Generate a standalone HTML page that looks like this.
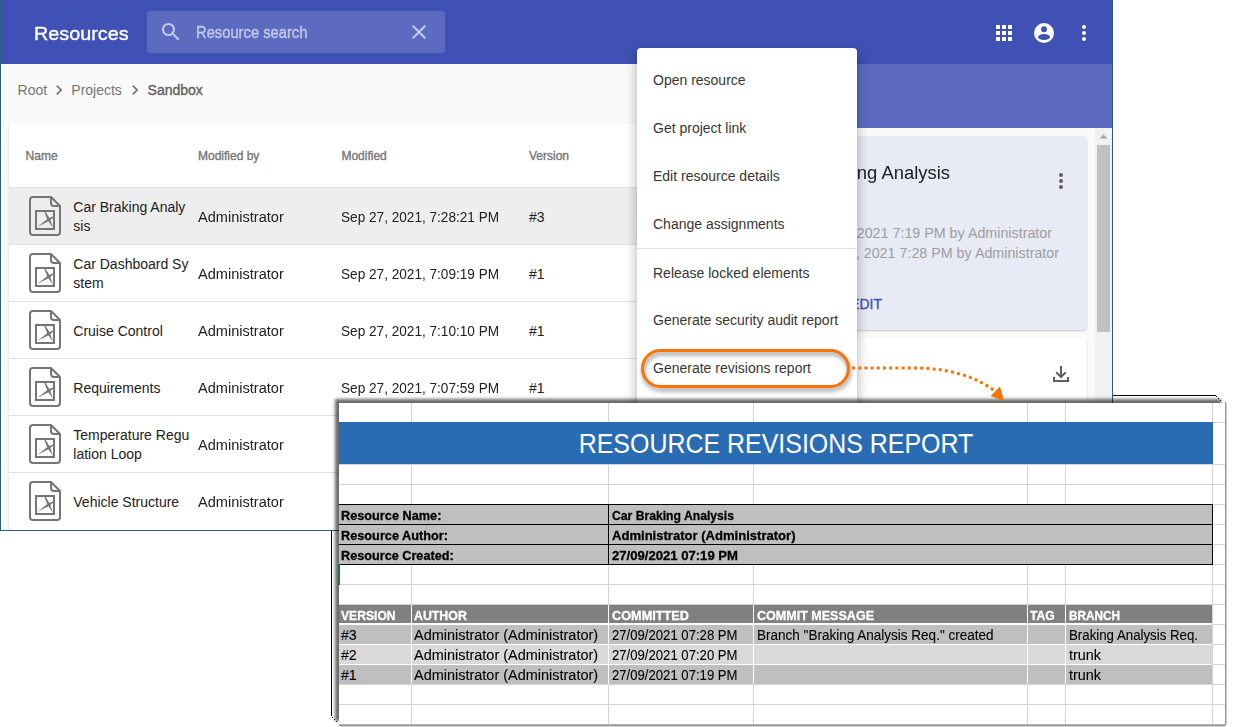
<!DOCTYPE html>
<html><head><meta charset="utf-8"><style>
html,body{margin:0;padding:0;width:1249px;height:727px;overflow:hidden;background:#fff;}
body{position:relative;font-family:"Liberation Sans",sans-serif;}
.t{position:absolute;white-space:nowrap;}
.r{position:absolute;}
</style></head><body>
<div class="r" style="left:0;top:0;width:1113px;height:531px;overflow:hidden">
<div class="r" style="left:1px;top:64px;width:1111px;height:466px;background:#fafafa;"></div>
<div class="r" style="left:0px;top:0px;width:1112px;height:64px;background:#3f51b5;"></div>
<div class="r" style="left:740px;top:64px;width:372px;height:64px;background:#5c6bc0;"></div>
<div class="t " style="left:33.8px;top:21.92px;font-size:19px;line-height:23px;color:#fff;font-weight:normal;transform:scaleX(1.0408);transform-origin:0 0;-webkit-text-stroke:0.35px currentColor;">Resources</div>
<div class="r" style="left:147px;top:11px;width:298px;height:42px;background:#5c6bc0;border-radius:4px"></div>
<svg class="r" style="left:159px;top:20px" width="24" height="24" viewBox="0 0 24 24"><path fill="#c5cae9" d="M15.5 14h-.79l-.28-.27C15.41 12.59 16 11.11 16 9.5 16 5.91 13.09 3 9.5 3S3 5.91 3 9.5 5.91 16 9.5 16c1.61 0 3.09-.59 4.23-1.57l.27.28v.79l5 4.99L20.49 19l-4.99-5zm-6 0C7.01 14 5 11.99 5 9.5S7.01 5 9.5 5 14 7.01 14 9.5 11.99 14 9.5 14z"/></svg>
<div class="t " style="left:195.6px;top:22.76px;font-size:16px;line-height:19px;color:#c5cae9;font-weight:normal;transform:scaleX(0.9214);transform-origin:0 0;-webkit-text-stroke:0.35px currentColor;">Resource search</div>
<svg class="r" style="left:407px;top:20px" width="24" height="24" viewBox="0 0 24 24"><path fill="#c5cae9" d="M19 6.41L17.59 5 12 10.59 6.41 5 5 6.41 10.59 12 5 17.59 6.41 19 12 13.41 17.59 19 19 17.59 13.41 12z"/></svg>
<div class="r" style="left:996px;top:25px;width:4px;height:4px;background:#fff;"></div>
<div class="r" style="left:996px;top:31px;width:4px;height:4px;background:#fff;"></div>
<div class="r" style="left:996px;top:37px;width:4px;height:4px;background:#fff;"></div>
<div class="r" style="left:1002px;top:25px;width:4px;height:4px;background:#fff;"></div>
<div class="r" style="left:1002px;top:31px;width:4px;height:4px;background:#fff;"></div>
<div class="r" style="left:1002px;top:37px;width:4px;height:4px;background:#fff;"></div>
<div class="r" style="left:1008px;top:25px;width:4px;height:4px;background:#fff;"></div>
<div class="r" style="left:1008px;top:31px;width:4px;height:4px;background:#fff;"></div>
<div class="r" style="left:1008px;top:37px;width:4px;height:4px;background:#fff;"></div>
<svg class="r" style="left:1034px;top:23px" width="20" height="20" viewBox="0 0 20 20"><circle cx="10" cy="10" r="10" fill="#fff"/><circle cx="10" cy="6.2" r="3" fill="#3f51b5"/><ellipse cx="10" cy="14" rx="6" ry="3" fill="#3f51b5"/></svg>
<div class="r" style="left:1082px;top:25px;width:4px;height:4px;background:#fff;border-radius:50%"></div>
<div class="r" style="left:1082px;top:31px;width:4px;height:4px;background:#fff;border-radius:50%"></div>
<div class="r" style="left:1082px;top:37px;width:4px;height:4px;background:#fff;border-radius:50%"></div>
<div class="t " style="left:17.6px;top:81.65px;font-size:14px;line-height:17px;color:#757575;font-weight:normal;">Root</div>
<svg class="r" style="left:48.8px;top:80px" width="20" height="20" viewBox="0 0 24 24"><path fill="#757575" d="M10 6L8.59 7.41 13.17 12l-4.58 4.59L10 18l6-6z"/></svg>
<div class="t " style="left:71.3px;top:81.65px;font-size:14px;line-height:17px;color:#757575;font-weight:normal;">Projects</div>
<svg class="r" style="left:125.3px;top:80px" width="20" height="20" viewBox="0 0 24 24"><path fill="#757575" d="M10 6L8.59 7.41 13.17 12l-4.58 4.59L10 18l6-6z"/></svg>
<div class="t " style="left:147.6px;top:81.65px;font-size:14px;line-height:17px;color:#616161;font-weight:normal;-webkit-text-stroke:0.35px currentColor;">Sandbox</div>
<div class="r" style="left:9px;top:123px;width:700px;height:407px;background:#fff;border-radius:4px;box-shadow:0 1px 3px rgba(0,0,0,.15)"></div>
<div class="t " style="left:25.6px;top:149.34px;font-size:12px;line-height:14px;color:#757575;font-weight:normal;-webkit-text-stroke:0.35px currentColor;">Name</div>
<div class="t " style="left:198px;top:149.34px;font-size:12px;line-height:14px;color:#757575;font-weight:normal;-webkit-text-stroke:0.35px currentColor;">Modified by</div>
<div class="t " style="left:341.4px;top:149.34px;font-size:12px;line-height:14px;color:#757575;font-weight:normal;-webkit-text-stroke:0.35px currentColor;">Modified</div>
<div class="t " style="left:529px;top:149.34px;font-size:12px;line-height:14px;color:#757575;font-weight:normal;-webkit-text-stroke:0.35px currentColor;">Version</div>
<div class="r" style="left:9px;top:187px;width:700px;height:57px;background:#eeeeee;"></div>
<div class="r" style="left:9px;top:187px;width:700px;height:1px;background:#e0e0e0;"></div>
<svg class="r" style="left:29px;top:196px" width="32" height="40" viewBox="0 0 32 40">
<path d="M1,4 Q1,1 4,1 L22,1 L31,10 L31,36 Q31,39 28,39 L4,39 Q1,39 1,36 Z" fill="none" stroke="#757575" stroke-width="2" stroke-linejoin="round"/>
<path d="M22,1 L22,7 Q22,10 25,10 L31,10" fill="none" stroke="#757575" stroke-width="2"/>
<rect x="7" y="15" width="18" height="18" fill="none" stroke="#757575" stroke-width="2"/>
<polygon points="15.05,15.2 15.95,14.8 20.96,23.11 24,31.7 18.64,24.29" fill="#757575"/>
<polygon points="8.5,30.7 19.11,22.6 23.73,20.58 24.27,21.42 20.49,24.8" fill="#757575"/>
</svg>
<div class="t " style="left:73.3px;top:198.65px;font-size:14px;line-height:17px;color:#212121;font-weight:normal;">Car Braking Analy</div>
<div class="t " style="left:73.3px;top:217.65px;font-size:14px;line-height:17px;color:#212121;font-weight:normal;">sis</div>
<div class="t " style="left:198px;top:208.65px;font-size:14px;line-height:17px;color:#212121;font-weight:normal;transform:scaleX(1.0400);transform-origin:0 0;">Administrator</div>
<div class="t " style="left:341.4px;top:208.65px;font-size:14px;line-height:17px;color:#212121;font-weight:normal;transform:scaleX(0.9720);transform-origin:0 0;">Sep 27, 2021, 7:28:21 PM</div>
<div class="t " style="left:529px;top:208.65px;font-size:14px;line-height:17px;color:#212121;font-weight:normal;">#3</div>
<div class="r" style="left:9px;top:244px;width:700px;height:1px;background:#e0e0e0;"></div>
<svg class="r" style="left:29px;top:253px" width="32" height="40" viewBox="0 0 32 40">
<path d="M1,4 Q1,1 4,1 L22,1 L31,10 L31,36 Q31,39 28,39 L4,39 Q1,39 1,36 Z" fill="none" stroke="#757575" stroke-width="2" stroke-linejoin="round"/>
<path d="M22,1 L22,7 Q22,10 25,10 L31,10" fill="none" stroke="#757575" stroke-width="2"/>
<rect x="7" y="15" width="18" height="18" fill="none" stroke="#757575" stroke-width="2"/>
<polygon points="15.05,15.2 15.95,14.8 20.96,23.11 24,31.7 18.64,24.29" fill="#757575"/>
<polygon points="8.5,30.7 19.11,22.6 23.73,20.58 24.27,21.42 20.49,24.8" fill="#757575"/>
</svg>
<div class="t " style="left:73.3px;top:255.65px;font-size:14px;line-height:17px;color:#212121;font-weight:normal;">Car Dashboard Sy</div>
<div class="t " style="left:73.3px;top:274.65px;font-size:14px;line-height:17px;color:#212121;font-weight:normal;">stem</div>
<div class="t " style="left:198px;top:265.65px;font-size:14px;line-height:17px;color:#212121;font-weight:normal;transform:scaleX(1.0400);transform-origin:0 0;">Administrator</div>
<div class="t " style="left:341.4px;top:265.65px;font-size:14px;line-height:17px;color:#212121;font-weight:normal;transform:scaleX(0.9720);transform-origin:0 0;">Sep 27, 2021, 7:09:19 PM</div>
<div class="t " style="left:529px;top:265.65px;font-size:14px;line-height:17px;color:#212121;font-weight:normal;">#1</div>
<div class="r" style="left:9px;top:301px;width:700px;height:1px;background:#e0e0e0;"></div>
<svg class="r" style="left:29px;top:310px" width="32" height="40" viewBox="0 0 32 40">
<path d="M1,4 Q1,1 4,1 L22,1 L31,10 L31,36 Q31,39 28,39 L4,39 Q1,39 1,36 Z" fill="none" stroke="#757575" stroke-width="2" stroke-linejoin="round"/>
<path d="M22,1 L22,7 Q22,10 25,10 L31,10" fill="none" stroke="#757575" stroke-width="2"/>
<rect x="7" y="15" width="18" height="18" fill="none" stroke="#757575" stroke-width="2"/>
<polygon points="15.05,15.2 15.95,14.8 20.96,23.11 24,31.7 18.64,24.29" fill="#757575"/>
<polygon points="8.5,30.7 19.11,22.6 23.73,20.58 24.27,21.42 20.49,24.8" fill="#757575"/>
</svg>
<div class="t " style="left:73.3px;top:322.65px;font-size:14px;line-height:17px;color:#212121;font-weight:normal;">Cruise Control</div>
<div class="t " style="left:198px;top:322.65px;font-size:14px;line-height:17px;color:#212121;font-weight:normal;transform:scaleX(1.0400);transform-origin:0 0;">Administrator</div>
<div class="t " style="left:341.4px;top:322.65px;font-size:14px;line-height:17px;color:#212121;font-weight:normal;transform:scaleX(0.9720);transform-origin:0 0;">Sep 27, 2021, 7:10:10 PM</div>
<div class="t " style="left:529px;top:322.65px;font-size:14px;line-height:17px;color:#212121;font-weight:normal;">#1</div>
<div class="r" style="left:9px;top:358px;width:700px;height:1px;background:#e0e0e0;"></div>
<svg class="r" style="left:29px;top:367px" width="32" height="40" viewBox="0 0 32 40">
<path d="M1,4 Q1,1 4,1 L22,1 L31,10 L31,36 Q31,39 28,39 L4,39 Q1,39 1,36 Z" fill="none" stroke="#757575" stroke-width="2" stroke-linejoin="round"/>
<path d="M22,1 L22,7 Q22,10 25,10 L31,10" fill="none" stroke="#757575" stroke-width="2"/>
<rect x="7" y="15" width="18" height="18" fill="none" stroke="#757575" stroke-width="2"/>
<polygon points="15.05,15.2 15.95,14.8 20.96,23.11 24,31.7 18.64,24.29" fill="#757575"/>
<polygon points="8.5,30.7 19.11,22.6 23.73,20.58 24.27,21.42 20.49,24.8" fill="#757575"/>
</svg>
<div class="t " style="left:73.3px;top:379.65px;font-size:14px;line-height:17px;color:#212121;font-weight:normal;">Requirements</div>
<div class="t " style="left:198px;top:379.65px;font-size:14px;line-height:17px;color:#212121;font-weight:normal;transform:scaleX(1.0400);transform-origin:0 0;">Administrator</div>
<div class="t " style="left:341.4px;top:379.65px;font-size:14px;line-height:17px;color:#212121;font-weight:normal;transform:scaleX(0.9720);transform-origin:0 0;">Sep 27, 2021, 7:07:59 PM</div>
<div class="t " style="left:529px;top:379.65px;font-size:14px;line-height:17px;color:#212121;font-weight:normal;">#1</div>
<div class="r" style="left:9px;top:415px;width:700px;height:1px;background:#e0e0e0;"></div>
<svg class="r" style="left:29px;top:424px" width="32" height="40" viewBox="0 0 32 40">
<path d="M1,4 Q1,1 4,1 L22,1 L31,10 L31,36 Q31,39 28,39 L4,39 Q1,39 1,36 Z" fill="none" stroke="#757575" stroke-width="2" stroke-linejoin="round"/>
<path d="M22,1 L22,7 Q22,10 25,10 L31,10" fill="none" stroke="#757575" stroke-width="2"/>
<rect x="7" y="15" width="18" height="18" fill="none" stroke="#757575" stroke-width="2"/>
<polygon points="15.05,15.2 15.95,14.8 20.96,23.11 24,31.7 18.64,24.29" fill="#757575"/>
<polygon points="8.5,30.7 19.11,22.6 23.73,20.58 24.27,21.42 20.49,24.8" fill="#757575"/>
</svg>
<div class="t " style="left:73.3px;top:426.65px;font-size:14px;line-height:17px;color:#212121;font-weight:normal;">Temperature Regu</div>
<div class="t " style="left:73.3px;top:445.65px;font-size:14px;line-height:17px;color:#212121;font-weight:normal;">lation Loop</div>
<div class="t " style="left:198px;top:436.65px;font-size:14px;line-height:17px;color:#212121;font-weight:normal;transform:scaleX(1.0400);transform-origin:0 0;">Administrator</div>
<div class="t " style="left:341.4px;top:436.65px;font-size:14px;line-height:17px;color:#212121;font-weight:normal;transform:scaleX(0.9720);transform-origin:0 0;">Sep 27, 2021, 7:05:00 PM</div>
<div class="t " style="left:529px;top:436.65px;font-size:14px;line-height:17px;color:#212121;font-weight:normal;">#1</div>
<div class="r" style="left:9px;top:472px;width:700px;height:1px;background:#e0e0e0;"></div>
<svg class="r" style="left:29px;top:481px" width="32" height="40" viewBox="0 0 32 40">
<path d="M1,4 Q1,1 4,1 L22,1 L31,10 L31,36 Q31,39 28,39 L4,39 Q1,39 1,36 Z" fill="none" stroke="#757575" stroke-width="2" stroke-linejoin="round"/>
<path d="M22,1 L22,7 Q22,10 25,10 L31,10" fill="none" stroke="#757575" stroke-width="2"/>
<rect x="7" y="15" width="18" height="18" fill="none" stroke="#757575" stroke-width="2"/>
<polygon points="15.05,15.2 15.95,14.8 20.96,23.11 24,31.7 18.64,24.29" fill="#757575"/>
<polygon points="8.5,30.7 19.11,22.6 23.73,20.58 24.27,21.42 20.49,24.8" fill="#757575"/>
</svg>
<div class="t " style="left:73.3px;top:493.65px;font-size:14px;line-height:17px;color:#212121;font-weight:normal;">Vehicle Structure</div>
<div class="t " style="left:198px;top:493.65px;font-size:14px;line-height:17px;color:#212121;font-weight:normal;transform:scaleX(1.0400);transform-origin:0 0;">Administrator</div>
<div class="t " style="left:341.4px;top:493.65px;font-size:14px;line-height:17px;color:#212121;font-weight:normal;transform:scaleX(0.9720);transform-origin:0 0;">Sep 27, 2021, 7:06:00 PM</div>
<div class="t " style="left:529px;top:493.65px;font-size:14px;line-height:17px;color:#212121;font-weight:normal;">#1</div>
<div class="r" style="left:764px;top:136px;width:323px;height:194px;background:#e8eaf6;border-radius:4px;box-shadow:0 1px 2px rgba(0,0,0,.2)"></div>
<div class="t " style="left:779.6px;top:162.26px;font-size:18px;line-height:22px;color:#212121;font-weight:normal;transform:scaleX(1.0240);transform-origin:0 0;">Car Braking Analysis</div>
<div class="r" style="left:1059px;top:173px;width:4px;height:4px;background:#616161;border-radius:50%"></div>
<div class="r" style="left:1059px;top:179px;width:4px;height:4px;background:#616161;border-radius:50%"></div>
<div class="r" style="left:1059px;top:185px;width:4px;height:4px;background:#616161;border-radius:50%"></div>
<div class="t " style="left:1052.4px;top:225.35px;font-size:14px;line-height:17px;color:#9e9e9e;font-weight:normal;transform:translateX(-100%) scaleX(1.02);transform-origin:100% 0;">Created: Sep 27, 2021 7:19 PM by Administrator</div>
<div class="t " style="left:1058.6px;top:244.65px;font-size:14px;line-height:17px;color:#9e9e9e;font-weight:normal;transform:translateX(-100%) scaleX(1.02);transform-origin:100% 0;">Modified: Sep 27, 2021 7:28 PM by Administrator</div>
<div class="t " style="left:882px;top:295.65px;font-size:14px;line-height:17px;color:#3f51b5;font-weight:normal;-webkit-text-stroke:0.35px currentColor;transform:translateX(-100%);">EDIT</div>
<div class="r" style="left:764px;top:338px;width:323px;height:120px;background:#fff;border-radius:4px;box-shadow:0 1px 2px rgba(0,0,0,.2)"></div>
<svg class="r" style="left:1045px;top:358px" width="32" height="32" viewBox="1045 358 32 32"><g fill="none" stroke="#616161" stroke-width="2"><path d="M1061,366 V377"/><path d="M1056.2,372.2 L1061,377 L1065.8,372.2"/><path d="M1054,377 V381 H1068 V377"/></g></svg>
<div class="r" style="left:1095px;top:128px;width:17px;height:400px;background:#f1f1f1;"></div>
<svg class="r" style="left:1097px;top:131px" width="13" height="10" viewBox="0 0 13 10"><path d="M2.5,7.5 L6.5,3.5 L10.5,7.5 Z" fill="#a3a3a3"/></svg>
<div class="r" style="left:1097px;top:145px;width:13px;height:187px;background:#c1c1c1;"></div>
<div class="r" style="left:637px;top:48px;width:220px;height:380px;background:#fff;border-radius:4px;box-shadow:0 5px 5px -3px rgba(0,0,0,.2),0 8px 10px 1px rgba(0,0,0,.14),0 3px 14px 2px rgba(0,0,0,.12)"></div>
<div class="t " style="left:653px;top:71.65px;font-size:14px;line-height:17px;color:#363636;font-weight:normal;">Open resource</div>
<div class="t " style="left:653px;top:119.65px;font-size:14px;line-height:17px;color:#363636;font-weight:normal;">Get project link</div>
<div class="t " style="left:653px;top:167.65px;font-size:14px;line-height:17px;color:#363636;font-weight:normal;">Edit resource details</div>
<div class="t " style="left:653px;top:215.65px;font-size:14px;line-height:17px;color:#363636;font-weight:normal;">Change assignments</div>
<div class="t " style="left:653px;top:264.65px;font-size:14px;line-height:17px;color:#363636;font-weight:normal;">Release locked elements</div>
<div class="t " style="left:653px;top:312.15px;font-size:14px;line-height:17px;color:#363636;font-weight:normal;">Generate security audit report</div>
<div class="t " style="left:653px;top:359.65px;font-size:14px;line-height:17px;color:#363636;font-weight:normal;">Generate revisions report</div>
<div class="r" style="left:637px;top:248px;width:220px;height:1px;background:#e0e0e0;"></div>
<div class="r" style="left:0px;top:0px;width:1px;height:531px;background:#2c5c86;"></div>
<div class="r" style="left:1112px;top:0px;width:1px;height:531px;background:#2c5c86;"></div>
<div class="r" style="left:0px;top:530px;width:1113px;height:1px;background:#2c5c86;"></div>
</div>
<div class="r" style="left:339px;top:403px;width:886px;height:322px;background:#fff;box-shadow:-4px -4px 3px rgba(0,0,0,.58)"></div>
<div class="r" style="left:339px;top:422px;width:886px;height:1px;background:#d4d4d4;"></div>
<div class="r" style="left:339px;top:464px;width:886px;height:1px;background:#d4d4d4;"></div>
<div class="r" style="left:339px;top:484px;width:886px;height:1px;background:#d4d4d4;"></div>
<div class="r" style="left:339px;top:504px;width:886px;height:1px;background:#d4d4d4;"></div>
<div class="r" style="left:339px;top:524px;width:886px;height:1px;background:#d4d4d4;"></div>
<div class="r" style="left:339px;top:544px;width:886px;height:1px;background:#d4d4d4;"></div>
<div class="r" style="left:339px;top:564px;width:886px;height:1px;background:#d4d4d4;"></div>
<div class="r" style="left:339px;top:584px;width:886px;height:1px;background:#d4d4d4;"></div>
<div class="r" style="left:339px;top:604px;width:886px;height:1px;background:#d4d4d4;"></div>
<div class="r" style="left:339px;top:624px;width:886px;height:1px;background:#d4d4d4;"></div>
<div class="r" style="left:339px;top:644px;width:886px;height:1px;background:#d4d4d4;"></div>
<div class="r" style="left:339px;top:664px;width:886px;height:1px;background:#d4d4d4;"></div>
<div class="r" style="left:339px;top:684px;width:886px;height:1px;background:#d4d4d4;"></div>
<div class="r" style="left:339px;top:704px;width:886px;height:1px;background:#d4d4d4;"></div>
<div class="r" style="left:411px;top:403px;width:1px;height:322px;background:#d4d4d4;"></div>
<div class="r" style="left:608px;top:403px;width:1px;height:322px;background:#d4d4d4;"></div>
<div class="r" style="left:753px;top:403px;width:1px;height:322px;background:#d4d4d4;"></div>
<div class="r" style="left:1027px;top:403px;width:1px;height:322px;background:#d4d4d4;"></div>
<div class="r" style="left:1065px;top:403px;width:1px;height:322px;background:#d4d4d4;"></div>
<div class="r" style="left:1212px;top:403px;width:1px;height:322px;background:#d4d4d4;"></div>
<div class="r" style="left:339px;top:422px;width:874px;height:42px;background:#2a6cb3;"></div>
<div class="t " style="left:775.5px;top:427.30px;font-size:28px;line-height:34px;color:#fff;font-weight:normal;transform:translateX(-50%) scaleX(.891);transform-origin:50% 0;white-space:nowrap;">RESOURCE REVISIONS REPORT</div>
<div class="r" style="left:339px;top:504px;width:873px;height:60px;background:#bfbfbf;"></div>
<div class="r" style="left:339px;top:504px;width:874px;height:1px;background:#000;"></div>
<div class="r" style="left:339px;top:524px;width:874px;height:1px;background:#000;"></div>
<div class="r" style="left:339px;top:544px;width:874px;height:1px;background:#000;"></div>
<div class="r" style="left:339px;top:564px;width:874px;height:1px;background:#000;"></div>
<div class="r" style="left:608px;top:504px;width:1px;height:60px;background:#000;"></div>
<div class="r" style="left:1212px;top:504px;width:1px;height:61px;background:#000;"></div>
<div class="t " style="left:340.8px;top:507.50px;font-size:13px;line-height:16px;color:#000;font-weight:bold;transform:scaleX(0.9783);transform-origin:0 0;-webkit-text-stroke:0.3px currentColor;">Resource Name:</div>
<div class="t " style="left:611.5px;top:507.50px;font-size:13px;line-height:16px;color:#000;font-weight:bold;transform:scaleX(0.9362);transform-origin:0 0;-webkit-text-stroke:0.3px currentColor;">Car Braking Analysis</div>
<div class="t " style="left:340.8px;top:527.50px;font-size:13px;line-height:16px;color:#000;font-weight:bold;transform:scaleX(0.9788);transform-origin:0 0;-webkit-text-stroke:0.3px currentColor;">Resource Author:</div>
<div class="t " style="left:611.5px;top:527.50px;font-size:13px;line-height:16px;color:#000;font-weight:bold;transform:scaleX(1.0042);transform-origin:0 0;-webkit-text-stroke:0.3px currentColor;">Administrator (Administrator)</div>
<div class="t " style="left:340.8px;top:547.50px;font-size:13px;line-height:16px;color:#000;font-weight:bold;transform:scaleX(0.9747);transform-origin:0 0;-webkit-text-stroke:0.3px currentColor;">Resource Created:</div>
<div class="t " style="left:611.5px;top:547.50px;font-size:13px;line-height:16px;color:#000;font-weight:bold;transform:scaleX(1.0074);transform-origin:0 0;-webkit-text-stroke:0.3px currentColor;">27/09/2021 07:19 PM</div>
<div class="r" style="left:339px;top:605px;width:873px;height:18px;background:#808080;"></div>
<div class="r" style="left:339px;top:625px;width:873px;height:19px;background:#bfbfbf;"></div>
<div class="r" style="left:339px;top:645px;width:873px;height:19px;background:#d9d9d9;"></div>
<div class="r" style="left:339px;top:665px;width:873px;height:19px;background:#bfbfbf;"></div>
<div class="r" style="left:411px;top:605px;width:1px;height:79px;background:#fff;"></div>
<div class="r" style="left:608px;top:605px;width:1px;height:79px;background:#fff;"></div>
<div class="r" style="left:753px;top:605px;width:1px;height:79px;background:#fff;"></div>
<div class="r" style="left:1027px;top:605px;width:1px;height:79px;background:#fff;"></div>
<div class="r" style="left:1065px;top:605px;width:1px;height:79px;background:#fff;"></div>
<div class="r" style="left:339px;top:623px;width:873px;height:2px;background:#fff;"></div>
<div class="r" style="left:339px;top:644px;width:873px;height:1px;background:#fff;"></div>
<div class="r" style="left:339px;top:664px;width:873px;height:1px;background:#fff;"></div>
<div class="t " style="left:341px;top:607.50px;font-size:13px;line-height:16px;color:#fff;font-weight:bold;transform:scaleX(0.9331);transform-origin:0 0;-webkit-text-stroke:0.3px currentColor;">VERSION</div>
<div class="t " style="left:414.4px;top:607.50px;font-size:13px;line-height:16px;color:#fff;font-weight:bold;transform:scaleX(0.9495);transform-origin:0 0;-webkit-text-stroke:0.3px currentColor;">AUTHOR</div>
<div class="t " style="left:611.5px;top:607.50px;font-size:13px;line-height:16px;color:#fff;font-weight:bold;transform:scaleX(0.9784);transform-origin:0 0;-webkit-text-stroke:0.3px currentColor;">COMMITTED</div>
<div class="t " style="left:756.8px;top:607.50px;font-size:13px;line-height:16px;color:#fff;font-weight:bold;transform:scaleX(0.9643);transform-origin:0 0;-webkit-text-stroke:0.3px currentColor;">COMMIT MESSAGE</div>
<div class="t " style="left:1030.2px;top:607.50px;font-size:13px;line-height:16px;color:#fff;font-weight:bold;transform:scaleX(0.9332);transform-origin:0 0;-webkit-text-stroke:0.3px currentColor;">TAG</div>
<div class="t " style="left:1068.7px;top:607.50px;font-size:13px;line-height:16px;color:#fff;font-weight:bold;transform:scaleX(0.9052);transform-origin:0 0;-webkit-text-stroke:0.3px currentColor;">BRANCH</div>
<div class="t " style="left:341px;top:626.65px;font-size:14px;line-height:17px;color:#000;font-weight:normal;transform:scaleX(1.0000);transform-origin:0 0;-webkit-text-stroke:0.1px #000;">#3</div>
<div class="t " style="left:414.4px;top:626.65px;font-size:14px;line-height:17px;color:#000;font-weight:normal;transform:scaleX(1.0333);transform-origin:0 0;-webkit-text-stroke:0.1px #000;">Administrator (Administrator)</div>
<div class="t " style="left:611.5px;top:626.65px;font-size:14px;line-height:17px;color:#000;font-weight:normal;transform:scaleX(0.9378);transform-origin:0 0;-webkit-text-stroke:0.1px #000;">27/09/2021 07:28 PM</div>
<div class="t " style="left:756.8px;top:626.65px;font-size:14px;line-height:17px;color:#000;font-weight:normal;transform:scaleX(0.9657);transform-origin:0 0;-webkit-text-stroke:0.1px #000;">Branch &quot;Braking Analysis Req.&quot; created</div>
<div class="t " style="left:1068.7px;top:626.65px;font-size:14px;line-height:17px;color:#000;font-weight:normal;transform:scaleX(0.9474);transform-origin:0 0;-webkit-text-stroke:0.1px #000;">Braking Analysis Req.</div>
<div class="t " style="left:341px;top:646.65px;font-size:14px;line-height:17px;color:#000;font-weight:normal;transform:scaleX(1.0000);transform-origin:0 0;-webkit-text-stroke:0.1px #000;">#2</div>
<div class="t " style="left:414.4px;top:646.65px;font-size:14px;line-height:17px;color:#000;font-weight:normal;transform:scaleX(1.0333);transform-origin:0 0;-webkit-text-stroke:0.1px #000;">Administrator (Administrator)</div>
<div class="t " style="left:611.5px;top:646.65px;font-size:14px;line-height:17px;color:#000;font-weight:normal;transform:scaleX(0.9378);transform-origin:0 0;-webkit-text-stroke:0.1px #000;">27/09/2021 07:20 PM</div>
<div class="t " style="left:1068.7px;top:646.65px;font-size:14px;line-height:17px;color:#000;font-weight:normal;transform:scaleX(1.0286);transform-origin:0 0;-webkit-text-stroke:0.1px #000;">trunk</div>
<div class="t " style="left:341px;top:666.65px;font-size:14px;line-height:17px;color:#000;font-weight:normal;transform:scaleX(1.0000);transform-origin:0 0;-webkit-text-stroke:0.1px #000;">#1</div>
<div class="t " style="left:414.4px;top:666.65px;font-size:14px;line-height:17px;color:#000;font-weight:normal;transform:scaleX(1.0333);transform-origin:0 0;-webkit-text-stroke:0.1px #000;">Administrator (Administrator)</div>
<div class="t " style="left:611.5px;top:666.65px;font-size:14px;line-height:17px;color:#000;font-weight:normal;transform:scaleX(0.9378);transform-origin:0 0;-webkit-text-stroke:0.1px #000;">27/09/2021 07:19 PM</div>
<div class="t " style="left:1068.7px;top:666.65px;font-size:14px;line-height:17px;color:#000;font-weight:normal;transform:scaleX(1.0286);transform-origin:0 0;-webkit-text-stroke:0.1px #000;">trunk</div>
<div class="r" style="left:338px;top:564px;width:1.5px;height:21px;background:#217346;"></div>
<div class="r" style="left:1225px;top:402px;width:1px;height:323px;background:#959595;"></div>
<div class="r" style="left:1226px;top:403px;width:1px;height:322px;background:#cfcfcf;"></div>
<div class="r" style="left:339px;top:724px;width:886px;height:1px;background:#b5b5b5;"></div>
<div class="r" style="left:339px;top:725px;width:886px;height:1px;background:#959595;"></div>
<div class="r" style="left:340px;top:726px;width:886px;height:1px;background:#d5d5d5;"></div>
<div class="r" style="left:1113px;top:395px;width:103px;height:1px;background:#000;"></div>
<div class="r" style="left:331px;top:531px;width:1px;height:185px;background:#000;"></div>
<div class="r" style="left:1216px;top:396px;width:1px;height:1px;background:#000;"></div>
<div class="r" style="left:1218px;top:398px;width:1px;height:1px;background:#000;"></div>
<div class="r" style="left:1220px;top:400px;width:1px;height:1px;background:#000;"></div>
<div class="r" style="left:332px;top:717px;width:1px;height:1px;background:#000;"></div>
<div class="r" style="left:334px;top:719px;width:1px;height:1px;background:#000;"></div>
<div class="r" style="left:336px;top:721px;width:1px;height:1px;background:#000;"></div>
<div class="r" style="left:641px;top:349px;width:203px;height:33px;border:3px solid #f97306;border-radius:20px;filter:drop-shadow(1px 3px 2px rgba(0,0,0,.45))"></div>
<svg class="r" style="left:0;top:0" width="1249" height="727"><path d="M852,368 L915,368 C950,368 980,378 997,393" fill="none" stroke="#f97306" stroke-width="3" stroke-dasharray="3 3.2"/><polygon points="1004,401 990.5,396 1000,386.5" fill="#f97306"/></svg>
</body></html>
